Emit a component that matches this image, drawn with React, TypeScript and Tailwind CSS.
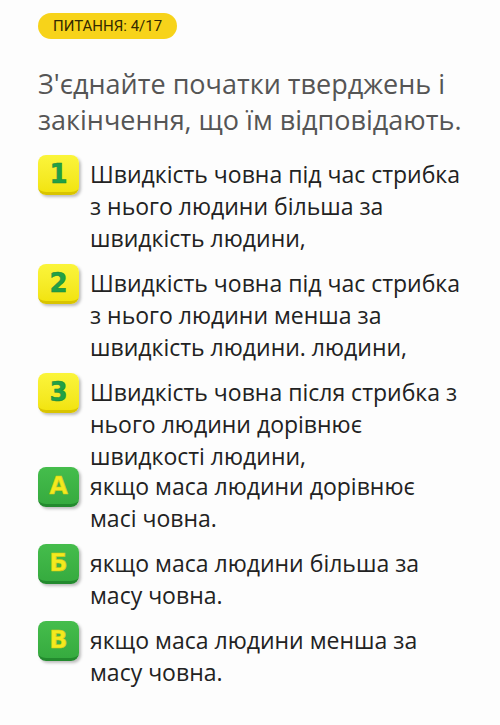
import React from "react";

type Item = { mark: string; kind: "q" | "a"; text: string };

const questions: Item[] = [
  { mark: "1", kind: "q", text: "Швидкість човна під час стрибка з нього людини більша за швидкість людини," },
  { mark: "2", kind: "q", text: "Швидкість човна під час стрибка з нього людини менша за швидкість людини. людини," },
  { mark: "3", kind: "q", text: "Швидкість човна після стрибка з нього людини дорівнює швидкості людини," },
];

const answers: Item[] = [
  { mark: "А", kind: "a", text: "якщо маса людини дорівнює масі човна." },
  { mark: "Б", kind: "a", text: "якщо маса людини більша за масу човна." },
  { mark: "В", kind: "a", text: "якщо маса людини менша за масу човна." },
];

function Mark({ mark, kind }: { mark: string; kind: "q" | "a" }) {
  const q = kind === "q";
  return (
    <div
      className={
        q
          ? "w-[41px] h-[40px] shrink-0 rounded-[8px] flex items-center justify-center bg-gradient-to-b from-[#fbf53a] to-[#f2e40e] border-b-[3px] border-[#d9c400] shadow-[2px_2px_3px_rgba(0,0,0,0.25)]"
          : "w-[41px] h-[40px] shrink-0 rounded-[8px] flex items-center justify-center bg-gradient-to-b from-[#45bd4c] to-[#36ab3f] border-b-[3px] border-[#238a2e] shadow-[2px_2px_3px_rgba(0,0,0,0.25)]"
      }
    >
      <span
        className={
          q
            ? "text-[26px] leading-none font-black text-[#22a046] [font-family:'DejaVu_Sans',sans-serif] [-webkit-text-stroke:0.5px_#1b8a3a]"
            : "text-[24px] leading-none font-black text-[#f3ea1e] [font-family:'DejaVu_Sans',sans-serif] [-webkit-text-stroke:0.5px_#d8c810]"
        }
      >
        {mark}
      </span>
    </div>
  );
}

function Row({ item, className }: { item: Item; className?: string }) {
  return (
    <div className={"flex items-start gap-[11px] " + (className ?? "")}>
      <Mark mark={item.mark} kind={item.kind} />
      <p className="text-[23px] leading-[32px] text-[#222222] mt-[3px]">{item.text}</p>
    </div>
  );
}

export default function App() {
  return (
    <div className="min-h-[725px] w-[500px] bg-[#fdfdfd] px-[38px] pt-[13px] [font-family:'Open_Sans',sans-serif]">
      <div className="inline-flex h-[26px] items-center rounded-full bg-[#f7d31a] px-[15px] text-[15px] text-[#332a00] [font-family:Roboto,sans-serif]">
        ПИТАННЯ: 4/17
      </div>
      <h1 className="mt-[27px] text-[27px] leading-[36px] text-[#555555] font-normal">
        З'єднайте початки тверджень і закінчення, що їм відповідають.
      </h1>
      <div className="mt-[17px] flex flex-col gap-[10px]">
        {questions.map((it) => (
          <Row key={it.mark} item={it} />
        ))}
      </div>
      <div className="-mt-[5px] flex flex-col gap-[10px]">
        {answers.map((it) => (
          <Row key={it.mark} item={it} />
        ))}
      </div>
    </div>
  );
}
